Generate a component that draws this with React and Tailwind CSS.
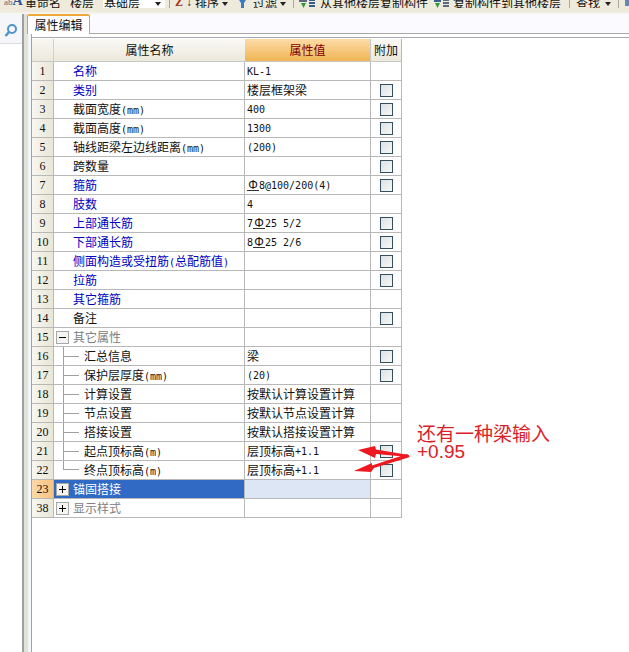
import React from "react";

const cjk = '"Noto Sans CJK SC", "Noto Sans CJK JP", sans-serif';

const rows = [
  { n: 1, name: "名称", value: "KL-1", blue: true },
  { n: 2, name: "类别", value: "楼层框架梁", blue: true, check: true },
  { n: 3, name: "截面宽度(mm)", value: "400", check: true },
  { n: 4, name: "截面高度(mm)", value: "1300", check: true },
  { n: 5, name: "轴线距梁左边线距离(mm)", value: "(200)", check: true },
  { n: 6, name: "跨数量", value: "", check: true },
  { n: 7, name: "箍筋", value: "Φ8@100/200(4)", blue: true, check: true },
  { n: 8, name: "肢数", value: "4", blue: true },
  { n: 9, name: "上部通长筋", value: "7Φ25 5/2", blue: true, check: true },
  { n: 10, name: "下部通长筋", value: "8Φ25 2/6", blue: true, check: true },
  { n: 11, name: "侧面构造或受扭筋(总配筋值)", value: "", blue: true, check: true },
  { n: 12, name: "拉筋", value: "", blue: true, check: true },
  { n: 13, name: "其它箍筋", value: "", blue: true },
  { n: 14, name: "备注", value: "", check: true },
  { n: 15, name: "其它属性", value: "", group: "minus" },
  { n: 16, name: "汇总信息", value: "梁", tree: true, check: true },
  { n: 17, name: "保护层厚度(mm)", value: "(20)", tree: true, check: true },
  { n: 18, name: "计算设置", value: "按默认计算设置计算", tree: true },
  { n: 19, name: "节点设置", value: "按默认节点设置计算", tree: true },
  { n: 20, name: "搭接设置", value: "按默认搭接设置计算", tree: true },
  { n: 21, name: "起点顶标高(m)", value: "层顶标高+1.1", tree: true, check: true },
  { n: 22, name: "终点顶标高(m)", value: "层顶标高+1.1", tree: "last", check: true },
  { n: 23, name: "锚固搭接", value: "", group: "plus", active: true },
  { n: 38, name: "显示样式", value: "", group: "plus" },
];

// latin runs are 6px wide next to 12px CJK, like the bitmap font in the original
const Mixed = ({ text }) =>
  text.split(/([\x20-\x7e]+|Φ)/).map((part, i) => {
    if (part === "") return null;
    if (part === "Φ")
      return (
        <span key={i} className="inline-block h-[11px] w-[12px] border-b border-[#333] text-center font-['Liberation_Sans',sans-serif] text-[12px] leading-[10px]">
          Φ
        </span>
      );
    if (/^[\x20-\x7e]+$/.test(part))
      return (
        <span key={i} className="whitespace-pre font-['DejaVu_Sans_Mono',monospace] text-[10px]">
          {part}
        </span>
      );
    return <span key={i}>{part}</span>;
  });

const Check = () => (
  <div className="h-[13px] w-[13px] border border-[#34505f] bg-gradient-to-br from-[#dde2e8] to-[#f8f8f2]" />
);

const ToolText = ({ children, className = "" }) => (
  <span className={`-mb-[1px] whitespace-nowrap text-[12px] leading-[12px] text-[#111] ${className}`}>{children}</span>
);

const Caret = ({ className = "" }) => (
  <div className={`mb-[2px] shrink-0 ${className}`}>
    <div className="h-0 w-0 border-x-[3px] border-t-[4px] border-x-transparent border-t-[#222]" />
  </div>
);

const Sep = () => <div className="h-[8px] w-[1px] shrink-0 bg-[#aaa89a]" />;

const Toolbar = () => (
  <div className="h-[14px] shrink-0 bg-gradient-to-b from-[#eeebdd] from-[80%] to-[#f8f7f2]">
    <div className="flex h-[8px] items-end overflow-hidden">
      <span className="ml-[4px] w-[21px] shrink-0 whitespace-nowrap font-['Liberation_Serif',serif] leading-[12px]">
        <span className="text-[9px] text-[#667]">ab</span>
        <span className="text-[14px] font-bold text-[#2f5597]">A</span>
      </span>
      <ToolText className="w-[45px]">重命名</ToolText>
      <ToolText className="w-[33px]">楼层</ToolText>
      <div className="flex h-[8px] w-[62px] shrink-0 items-end justify-between bg-white pl-[1px] pr-[4px]">
        <ToolText>基础层</ToolText>
        <Caret />
      </div>
      <div className="w-[4px] shrink-0" />
      <Sep />
      <div className="w-[5px] shrink-0" />
      <span className="w-[20px] shrink-0 whitespace-nowrap font-['Liberation_Serif',serif] text-[12px] font-bold leading-[11px] text-[#a83020]">
        Z <span className="text-[#222]">↓</span>
      </span>
      <ToolText className="w-[26px]">排序</ToolText>
      <Caret className="w-[18px] pl-[1px]" />
      <svg className="shrink-0" width="14" height="8" viewBox="0 0 14 8">
        <path d="M0 0h7L5 3v5H2V3z" fill="#3a7cc0" />
      </svg>
      <ToolText className="w-[27px]">过滤</ToolText>
      <Caret className="w-[13px]" />
      <Sep />
      <div className="w-[5px] shrink-0" />
      <svg className="mr-[4px] shrink-0" width="17" height="9" viewBox="0 0 17 9">
        <rect x="0" y="0" width="8" height="3" fill="#5a6a78" />
        <path d="M2 4h5L4.500 9z" fill="#2f9a3a" />
        <path d="M10 1h6M10 4h6M10 7h6" stroke="#3a5f8a" strokeWidth="2" />
      </svg>
      <ToolText className="w-[114px]">从其他楼层复制构件</ToolText>
      <svg className="mr-[4px] shrink-0" width="15" height="9" viewBox="0 0 15 9">
        <rect x="0" y="0" width="7" height="3" fill="#3a5f8a" />
        <path d="M1 4h5L3.500 9z" fill="#2f9a3a" />
        <path d="M9 1h6M9 4h6M9 7h6" stroke="#5a6a78" strokeWidth="2" />
      </svg>
      <ToolText className="w-[116px]">复制构件到其他楼层</ToolText>
      <Sep />
      <div className="w-[6px] shrink-0" />
      <ToolText className="w-[29px]">查找</ToolText>
      <Caret className="w-[13px]" />
      <Sep />
      <div className="ml-[6px] h-[6px] w-[4px] shrink-0 self-start bg-[#5a8ac0]" />
    </div>
  </div>
);

const Expander = ({ kind }) => (
  <div className="relative ml-[2px] mr-[4px] flex h-[13px] w-[13px] shrink-0 items-center justify-center border border-[#a8a8a8] bg-[#f4f4f0]">
    <div className="h-[1px] w-[7px] bg-black" />
    {kind === "plus" && <div className="absolute h-[7px] w-[1px] bg-black" />}
  </div>
);

const Row = ({ row }) => {
  const nameColor = row.active
    ? "text-white"
    : row.group
      ? "text-[#808080]"
      : row.blue
        ? "text-[#0000c0]"
        : "text-[#111]";
  return (
    <div className="flex h-[19px] border-b border-[#b8b8b8]">
      <div
        className={`flex w-[22px] items-center justify-center border-r border-[#b8b8b8] font-['Liberation_Serif',serif] text-[12px] text-[#111] ${
          row.active ? "bg-gradient-to-r from-[#fcd9a8] to-[#f9c380]" : "bg-gradient-to-r from-[#f8f7f1] to-[#e9e6d6]"
        }`}
      >
        {row.n}
      </div>
      <div className={`flex w-[191px] items-center border-r border-[#b8b8b8] ${row.active ? "bg-[#316ac5]" : ""} ${nameColor}`}>
        {row.group && <Expander kind={row.group} />}
        {row.tree && (
          <div className="ml-[9px] mr-[5px] flex h-full w-[16px] shrink-0 flex-col">
            {row.tree === "last" ? (
              <div className="h-1/2 border-b border-l border-[#a0a0a0]" />
            ) : (
              <div className="flex h-full items-center border-l border-[#a0a0a0]">
                <div className="w-full border-t border-[#a0a0a0]" />
              </div>
            )}
          </div>
        )}
        {!row.group && !row.tree && <div className="w-[19px]" />}
        <span className="whitespace-nowrap">
          <Mixed text={row.name} />
        </span>
      </div>
      <div className={`flex w-[126px] items-center whitespace-pre border-r border-[#b8b8b8] pl-[2px] text-[#111] ${row.active ? "bg-[#dce6f4]" : ""}`}>
        <Mixed text={row.value} />
      </div>
      <div className="flex w-[31px] items-center justify-center border-r border-[#b8b8b8]">{row.check && <Check />}</div>
    </div>
  );
};

const Arrows = () => (
  <svg className="absolute left-[350px] top-[440px]" width="62" height="36" viewBox="0 0 62 36">
    <path d="M8 10 L25 6 L26 9.500 L59 15 L59 17 L26 14 L25 18 Z" fill="#ee1820" />
    <path d="M4 31 L22 23 L22 25.500 L57 14 L60 17 L24 28 L21 32 Z" fill="#ee1820" />
  </svg>
);

export default function App() {
  return (
    <div className="relative flex h-[652px] w-[629px] flex-col overflow-hidden bg-white text-[12px]" style={{ fontFamily: cjk }}>
      <Toolbar />
      <div className="flex flex-1">
        <div className="w-[22px] shrink-0">
          <div className="flex h-[30px] items-center justify-center border-b border-[#dcdcdc] bg-[#f5f6fa] pt-[3px]">
            <svg width="14" height="14" viewBox="0 0 14 14" fill="none">
              <circle cx="8" cy="6" r="4" stroke="#4f94c8" strokeWidth="2" />
              <path d="M5 9 L1.500 13" stroke="#4f94c8" strokeWidth="2.500" />
            </svg>
          </div>
        </div>
        <div className="w-[2px] shrink-0 bg-[#9aa0a4]" />
        <div className="flex flex-1 flex-col">
          <div className="flex h-[20px] items-end bg-[#e4e2d8]">
            <div className="w-[3px] self-stretch" />
            <div className="flex h-[20px] w-[63px] items-center justify-center rounded-t-[3px] border-x border-t-2 border-[#a8a8a8] border-t-[#f0a838] bg-white text-[#111]">
              属性编辑
            </div>
            <div className="h-[20px] flex-1 border-b border-[#a8a8a8] bg-[#fbfbff]" />
          </div>
          <div className="flex flex-1">
            <div className="w-[4px] bg-[#e4e2d8]" />
            <div className="w-[3px] bg-[#f2f7fa]" />
            <div className="flex-1 border-l border-[#9aa4ac] pt-[3px]">
              <div className="h-full border-t border-[#a8a8b0] pt-[1px]">
                <div className="w-[370px]">
                  <div className="flex h-[23px] border-b border-[#c8c8c8] text-[#111]">
                    <div className="w-[22px] border-r border-[#d0d0d0] bg-gradient-to-b from-[#f8f7f1] to-[#ece9dc]" />
                    <div className="flex w-[191px] items-center justify-center bg-gradient-to-b from-[#f9f9f4] to-[#ece9dc]">属性名称</div>
                    <div className="flex w-[126px] items-center justify-center border-r border-[#c8c8c8] bg-gradient-to-b from-[#fcdba6] to-[#f0b552] text-[#800000]">属性值</div>
                    <div className="flex w-[31px] items-center justify-center border-r border-[#b8b8b8] bg-gradient-to-b from-[#f9f9f4] to-[#ece9dc]">附加</div>
                  </div>
                  {rows.map((row) => (
                    <Row key={row.n} row={row} />
                  ))}
                </div>
              </div>
            </div>
          </div>
        </div>
      </div>
      <Arrows />
      <div className="absolute left-[417px] top-[423px] whitespace-nowrap text-[19px] leading-[19px] text-[#dc2028]">
        还有一种梁输入
      </div>
      <div className="absolute left-[417px] top-[442px] font-['Liberation_Sans',sans-serif] text-[19px] leading-[19px] text-[#dc2028]">
        +0.95
      </div>
    </div>
  );
}
